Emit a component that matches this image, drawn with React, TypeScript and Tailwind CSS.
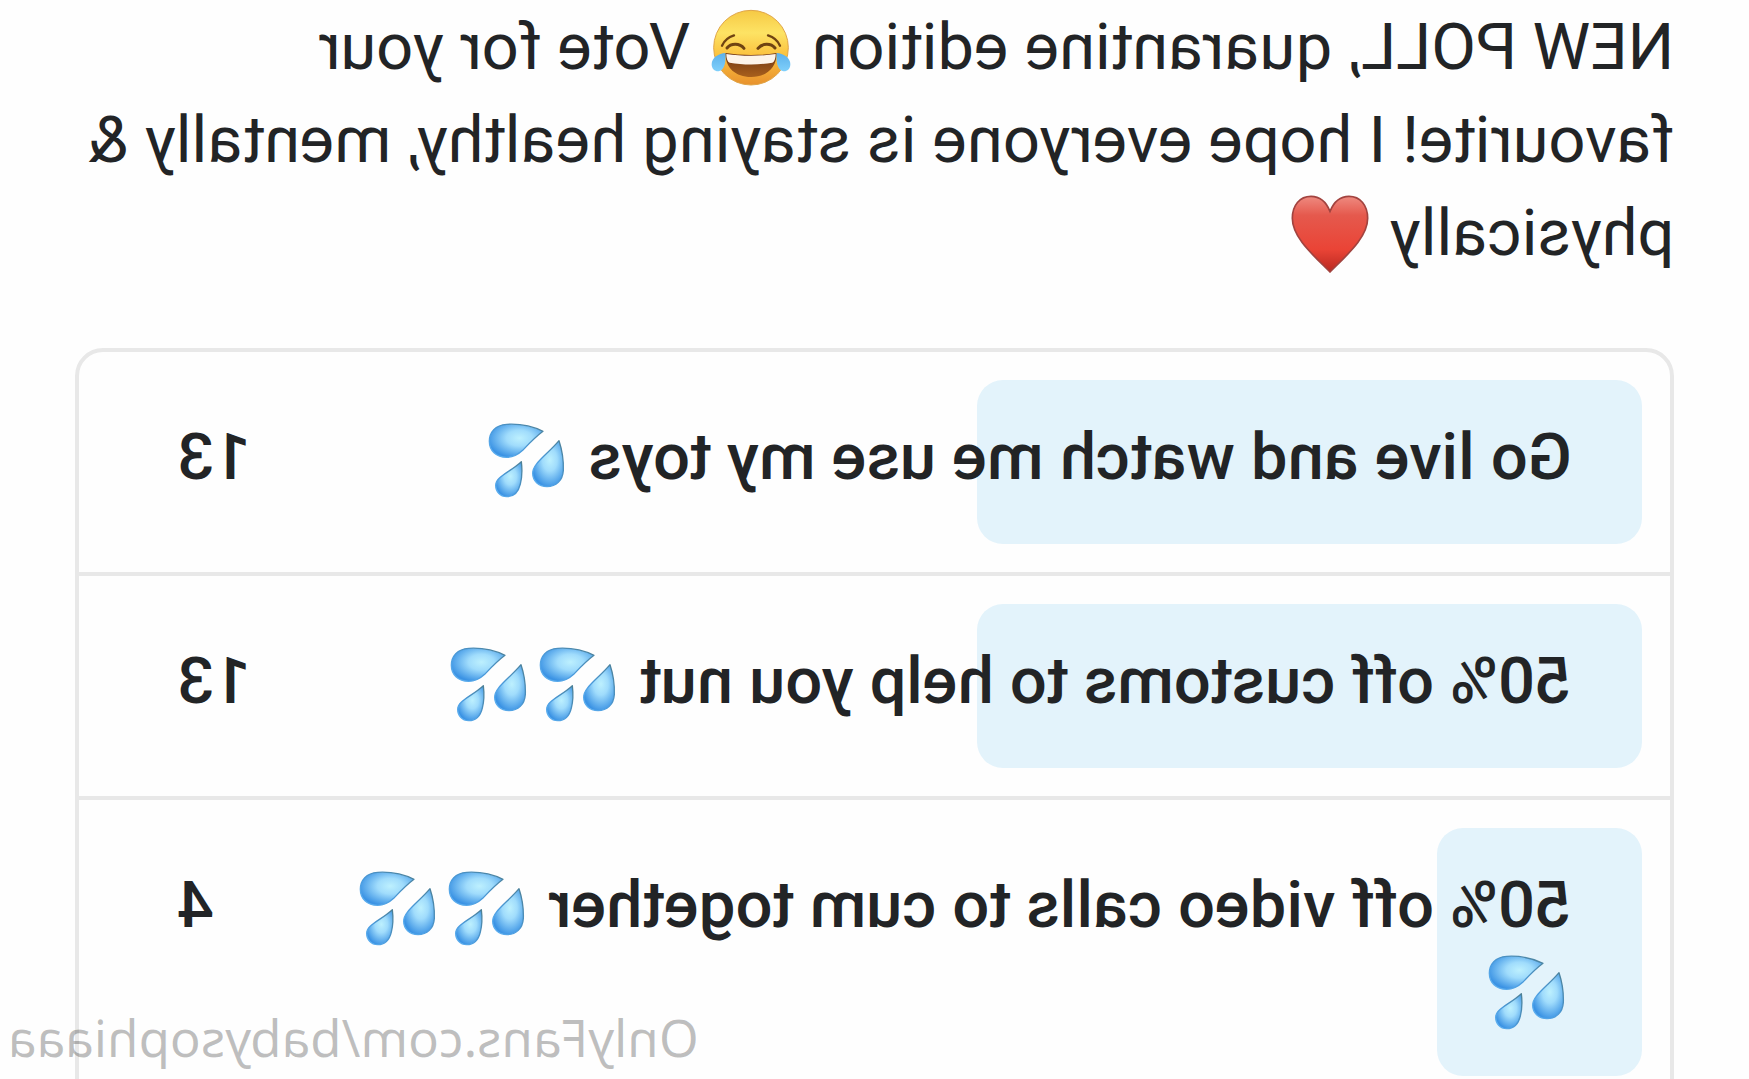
import type { ReactNode } from "react";

const OPTIONS = [
  { label: "Go live and watch me use my toys", drops: 1, votes: 13 },
  { label: "50% off customs to help you nut", drops: 2, votes: 13 },
  { label: "50% off video calls to cum together", drops: 3, votes: 4 },
];

const TOTAL_VOTES = OPTIONS.reduce((sum, option) => sum + option.votes, 0);

function Gradients() {
  return (
    <svg className="absolute w-0 h-0" aria-hidden="true">
      <defs>
        <radialGradient id="drop" cx="0.44" cy="0.42" r="0.6">
          <stop offset="0" stopColor="#bdf0fe" />
          <stop offset="0.4" stopColor="#a0dcfc" />
          <stop offset="1" stopColor="#3b93e4" />
        </radialGradient>
        <linearGradient id="dropEdge" x1="0" y1="0" x2="1" y2="1">
          <stop offset="0" stopColor="#4c7f94" />
          <stop offset="0.6" stopColor="#4a9bdd" />
          <stop offset="1" stopColor="#62b4f4" />
        </linearGradient>
        <linearGradient id="face" x1="0" y1="0" x2="0" y2="1">
          <stop offset="0" stopColor="#f6c944" />
          <stop offset="0.3" stopColor="#fde364" />
          <stop offset="0.6" stopColor="#fbc23f" />
          <stop offset="1" stopColor="#e8912d" />
        </linearGradient>
        <linearGradient id="mouth" x1="0" y1="0" x2="0" y2="1">
          <stop offset="0" stopColor="#6e3413" />
          <stop offset="1" stopColor="#a8601c" />
        </linearGradient>
        <linearGradient id="tear" x1="0" y1="0" x2="0" y2="1">
          <stop offset="0" stopColor="#5cb0ea" />
          <stop offset="1" stopColor="#7fd0fb" />
        </linearGradient>
        <linearGradient id="heart" x1="0" y1="0" x2="0" y2="1">
          <stop offset="0" stopColor="#ee8a80" />
          <stop offset="0.25" stopColor="#e5594d" />
          <stop offset="0.7" stopColor="#ea4436" />
          <stop offset="1" stopColor="#b92820" />
        </linearGradient>
      </defs>
    </svg>
  );
}

function Emoji({ label, children }: { label: string; children: ReactNode }) {
  return (
    <svg
      role="img"
      aria-label={label}
      viewBox="0 0 240 240"
      className="inline-block w-20 h-20 ml-1 mr-[5px] -my-4 align-[-3px]"
    >
      {children}
    </svg>
  );
}

function Joy() {
  return (
    <Emoji label="face with tears of joy">
      <circle cx="120" cy="119" r="112" fill="url(#face)" stroke="#e0a548" strokeWidth="3" />
      <path d="M33 113C40 97 53 87 69 82" fill="none" stroke="#6f4312" strokeWidth="7" strokeLinecap="round" />
      <path d="M207 113C200 97 187 87 171 82" fill="none" stroke="#6f4312" strokeWidth="7" strokeLinecap="round" />
      <path d="M48 120C60 105 86 105 99 121" fill="none" stroke="#6f4312" strokeWidth="9" strokeLinecap="round" />
      <path d="M192 120C180 105 154 105 141 121" fill="none" stroke="#6f4312" strokeWidth="9" strokeLinecap="round" />
      <path d="M43 135C90 143 150 143 197 135C197 180 166 207 120 207C74 207 43 180 43 135Z" fill="url(#mouth)" />
      <path d="M46 138C90 145 150 145 194 138C194 152 190 162 184 164C145 171 95 171 56 164C50 162 46 152 46 138Z" fill="#fdf4ea" />
      <path d="M43 135C24 136 2 148 2 169C2 184 12 191 23 190C42 187 45 158 43 135Z" fill="url(#tear)" />
      <path d="M197 135C216 136 238 148 238 169C238 184 228 191 217 190C198 187 195 158 197 135Z" fill="url(#tear)" />
    </Emoji>
  );
}

function Heart() {
  return (
    <Emoji label="red heart">
      <path
        d="M120 52C108 22 87 7 63 7C29 7 7 34 7 73C7 130 68 182 120 234C172 182 233 130 233 73C233 34 211 7 177 7C153 7 132 22 120 52Z"
        fill="url(#heart)"
        stroke="#a2433f"
        strokeWidth="5"
      />
    </Emoji>
  );
}

function Drops() {
  return (
    <Emoji label="sweat droplets">
      <g
        fill="url(#drop)"
        stroke="url(#dropEdge)"
        strokeWidth="4"
        strokeLinejoin="round"
        transform="translate(0 8)"
      >
        <path d="M75 32C105 17 148 9 184 11C218 13 236 35 236 62C236 90 216 110 184 110C165 110 149 101 135 88C116 68 98 49 75 32Z" />
        <path d="M27 60C17 90 13 120 14 149C16 180 36 198 63 198C89 198 106 180 106 158C106 128 63 103 27 60Z" />
        <path d="M140 123C137 148 138 171 143 190C149 215 165 228 184 228C204 228 217 213 217 194C217 168 176 156 140 123Z" />
      </g>
    </Emoji>
  );
}

function PollOption({ label, drops, votes }: (typeof OPTIONS)[number]) {
  return (
    <li className="p-7 border-b-4 border-[#e8e8e8]">
      <div className="relative flex items-start gap-4 px-[70px] pt-[35px] pb-[45px]">
        <div
          className="absolute inset-y-0 left-0 rounded-[26px] bg-[#e3f3fb]"
          style={{ width: `${(votes / TOTAL_VOTES) * 100}%` }}
        />
        <p className="relative flex-1">
          {label}{" "}
          {Array.from({ length: drops }, (_, i) => (
            <Drops key={i} />
          ))}
        </p>
        <span className="relative min-w-24 text-right">{votes}</span>
      </div>
    </li>
  );
}

export default function App() {
  return (
    <main className="relative h-screen overflow-hidden -scale-x-100 bg-[#fefefe] px-[75px] pt-px font-['Roboto',sans-serif] text-[#222426]">
      <Gradients />
      <p className="text-[65px] leading-[93px]">
        NEW POLL, quarantine edition <Joy /> Vote for your favourite! I hope everyone is staying
        healthy, mentally &amp; physically <Heart />
      </p>
      <ul className="mt-[68px] rounded-[28px] border-4 border-[#e8e8e8] text-[65px] leading-[84px] font-medium">
        {OPTIONS.map((option) => (
          <PollOption key={option.label} {...option} />
        ))}
      </ul>
      <a
        href="https://onlyfans.com/babysophiaaa"
        className="absolute right-2 bottom-2 font-['Noto_Sans',sans-serif] text-[51px] leading-[68px] text-black/25"
      >
        OnlyFans.com/babysophiaaa
      </a>
    </main>
  );
}
